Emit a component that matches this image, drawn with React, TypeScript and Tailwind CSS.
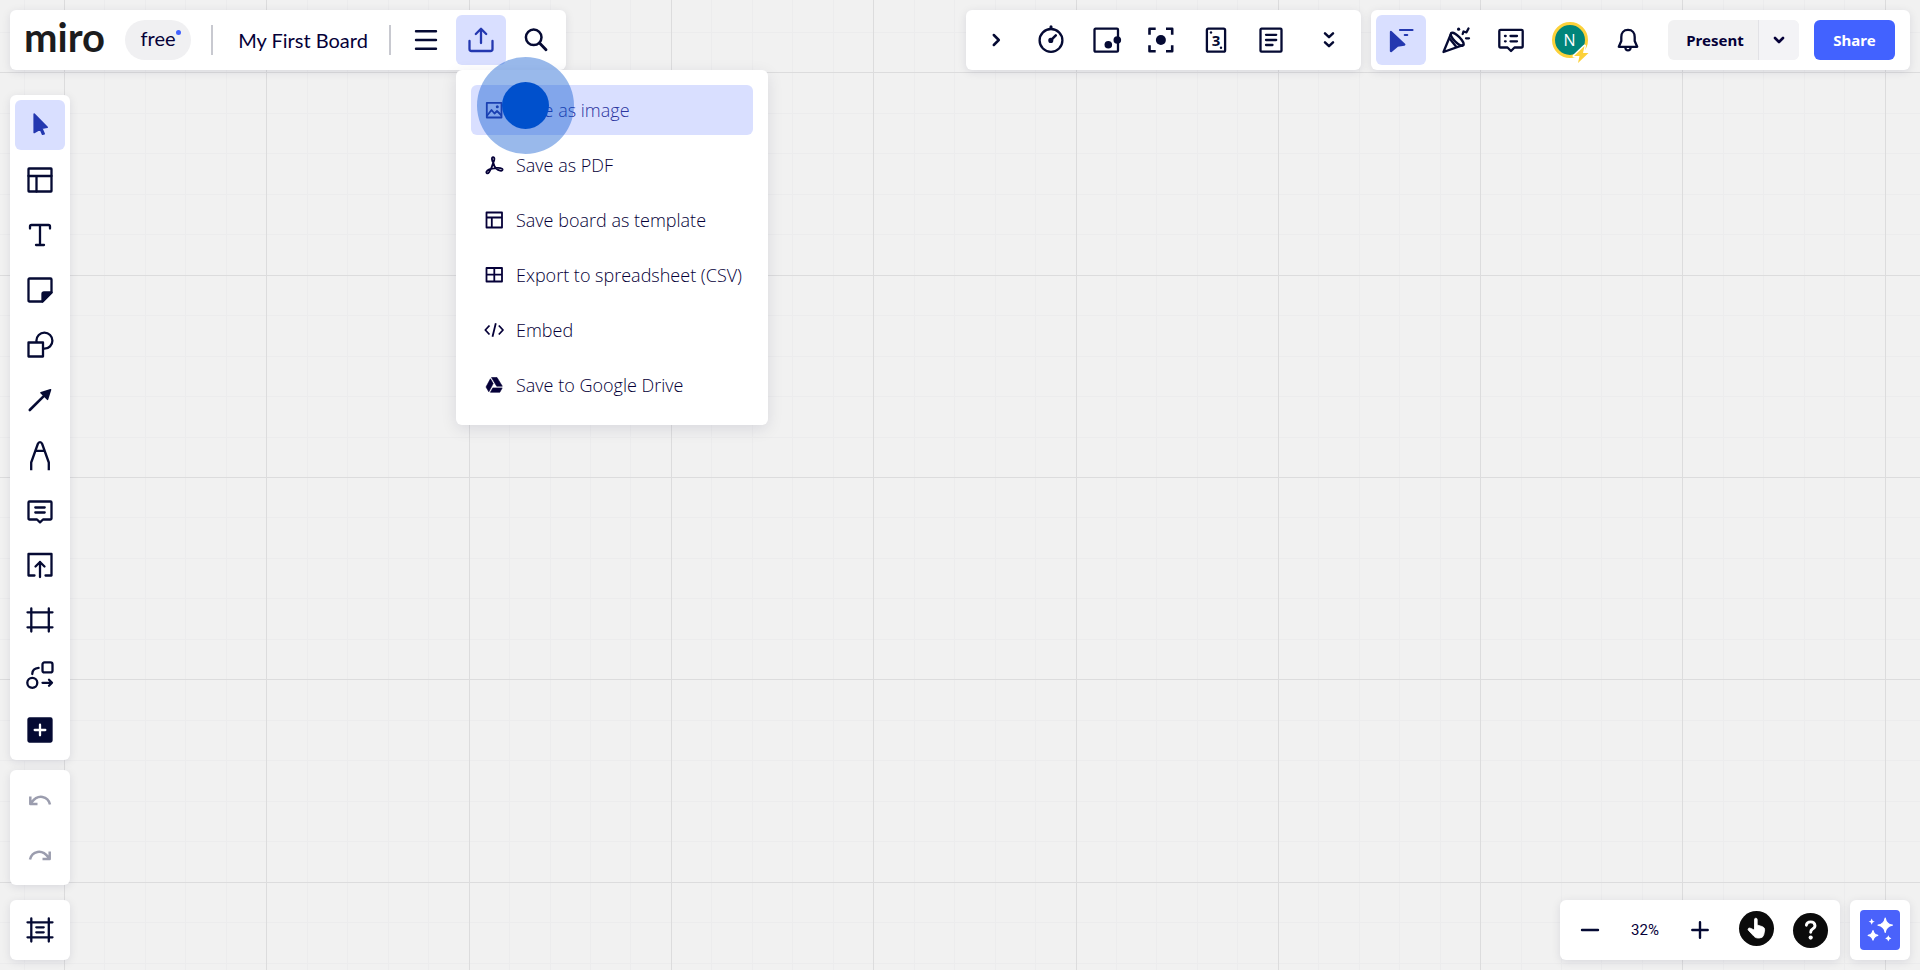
import type { ReactNode } from "react";

type IconProps = {
  children: ReactNode;
  className?: string;
};

type Tool = {
  label: string;
  icon: ReactNode;
};

const GRID_STEP = 40.46;
const GRID_X = 64 - GRID_STEP * 5;
const GRID_Y = 72.4 - GRID_STEP * 5;

// 28px drawing area used by every toolbar icon
function Icon({ children, className = "" }: IconProps) {
  return (
    <svg
      viewBox="0 0 28 28"
      className={`h-7 w-7 shrink-0 overflow-visible ${className}`}
      fill="none"
      stroke="currentColor"
      strokeWidth="2.3"
      strokeLinecap="round"
      strokeLinejoin="round"
      aria-hidden="true"
    >
      {children}
    </svg>
  );
}

function MenuIcon({ children }: IconProps) {
  return (
    <svg
      viewBox="0 0 24 24"
      className="h-6 w-6 shrink-0"
      fill="none"
      stroke="currentColor"
      strokeWidth="1.8"
      strokeLinejoin="round"
      aria-hidden="true"
    >
      {children}
    </svg>
  );
}

function IconButton({
  label,
  active = false,
  muted = false,
  children,
}: {
  label: string;
  active?: boolean;
  muted?: boolean;
  children: ReactNode;
}) {
  const color = active ? "bg-[#d9dfff] text-[#2438b0]" : muted ? "text-[#9b9dae]" : "text-[#050a33]";
  return (
    <button
      type="button"
      aria-label={label}
      className={`flex h-[50px] w-[50px] shrink-0 items-center justify-center rounded-md ${color}`}
    >
      {children}
    </button>
  );
}

function Panel({ children, className = "" }: IconProps) {
  return (
    <div className={`flex rounded-md bg-white shadow-[0_2px_10px_rgba(5,0,56,0.10)] ${className}`}>
      {children}
    </div>
  );
}

function BoardGrid() {
  const lines = Array.from({ length: 60 }, (_, i) => i);
  const ordered = [...lines.filter((i) => i % 5 !== 0), ...lines.filter((i) => i % 5 === 0)];
  return (
    <svg className="absolute inset-0 h-full w-full" aria-hidden="true">
      {ordered.map((i) => {
        const x = Math.round(GRID_X + i * GRID_STEP) + 0.5;
        const y = Math.round(GRID_Y + i * GRID_STEP) + 0.5;
        const color = i % 5 === 0 ? "#dcdcdd" : "#ececed";
        return (
          <g key={i} stroke={color}>
            <line x1={x} x2={x} y1="0" y2="100%" />
            <line x1="0" x2="100%" y1={y} y2={y} />
          </g>
        );
      })}
    </svg>
  );
}

const tools: Tool[] = [
  {
    label: "Templates",
    icon: (
      <Icon>
        <rect x="2.5" y="2.5" width="23" height="23" rx="0.5" />
        <path d="M2.5 10H25.5M10.5 10V25.5" />
      </Icon>
    ),
  },
  {
    label: "Text",
    icon: (
      <Icon>
        <path d="M4 7.5V5.5Q4 4 5.5 4H22.5Q24 4 24 5.5V7.5M14 4V24M10 24H18" />
      </Icon>
    ),
  },
  {
    label: "Sticky note",
    icon: (
      <Icon>
        <path d="M3.5 2.5H24.5Q25.5 2.5 25.5 3.5V16.5L16.5 25.5H3.5Q2.5 25.5 2.5 24.5V3.5Q2.5 2.5 3.5 2.5Z" />
        <path d="M25.5 16.5H18Q16.5 16.5 16.5 18V25.5Z" fill="currentColor" />
      </Icon>
    ),
  },
  {
    label: "Shapes",
    icon: (
      <Icon>
        <circle cx="18.4" cy="9.7" r="8" />
        <rect x="2.5" y="11.5" width="14.5" height="14" fill="white" />
      </Icon>
    ),
  },
  {
    label: "Connection line",
    icon: (
      <Icon>
        <path d="M3.8 24L18 9.8" strokeWidth="2.6" />
        <path d="M24.5 3.8L15 6.8L21.5 13.3Z" fill="currentColor" strokeWidth="1.6" />
      </Icon>
    ),
  },
  {
    label: "Pen",
    icon: (
      <Icon>
        <path d="M5.2 28V21.5L11.8 3Q12.5 1.2 14 1.2T16.2 3L22.8 21.5V28M9.5 9.8H18.5" strokeLinecap="square" />
      </Icon>
    ),
  },
  {
    label: "Comment",
    icon: (
      <Icon>
        <path d="M3.5 5.5H24.5Q25.5 5.5 25.5 6.5V22.5Q25.5 23.5 24.5 23.5H17L14 26.3L11 23.5H3.5Q2.5 23.5 2.5 22.5V6.5Q2.5 5.5 3.5 5.5Z" />
        <path d="M9.3 11.5H18.7M9.3 16.5H18.7" />
      </Icon>
    ),
  },
  {
    label: "Upload",
    icon: (
      <Icon>
        <path d="M8.5 24.5H2.5V3H25.5V24.5H19.5M14 26V11M9.5 15.5L14 11L18.5 15.5" />
      </Icon>
    ),
  },
  {
    label: "Frame",
    icon: (
      <Icon>
        <path d="M1.5 6.3H26.5M1.5 21.3H26.5M5.3 2.5V25.5M22.8 2.5V25.5" />
      </Icon>
    ),
  },
  {
    label: "Diagramming",
    icon: (
      <Icon>
        <rect x="16.5" y="1.4" width="10" height="10" rx="2" />
        <circle cx="6.3" cy="21.8" r="5" />
        <path d="M6.3 13V12.5Q6.6 7.3 12.6 6.8M16.5 21.8H26M23 18.8L26 21.8L23 24.8" />
      </Icon>
    ),
  },
  {
    label: "More apps",
    icon: (
      <Icon>
        <rect x="2.5" y="2.5" width="23" height="23" rx="1" fill="currentColor" />
        <path d="M14 8.7V19.3M8.7 14H19.3" stroke="white" />
      </Icon>
    ),
  },
];

const exportItems: Tool[] = [
  {
    label: "Save as image",
    icon: (
      <MenuIcon>
        <rect x="4.8" y="4.8" width="14.7" height="14.7" />
        <path d="M4.8 18L9.5 12L12.5 15.5L15 13L19.5 17.5" />
        <circle cx="15.3" cy="8.8" r="1.5" fill="currentColor" stroke="none" />
      </MenuIcon>
    ),
  },
  {
    label: "Save as PDF",
    icon: (
      <MenuIcon>
        <path d="M11.2 9.5C9.8 7.3 9.3 4.3 11.1 4.2C13 4.2 12.6 7.2 11.2 9.8C10.4 13 8.6 16.8 7.1 19.2C5.8 21.1 3.8 20.3 4.5 18.7C5.3 17.1 9.6 15.5 13.6 15C17 14.6 20.8 14.9 20.6 16.7C20.3 18.7 16.4 17.6 14.2 15.5C12.5 13.9 11.7 11.7 11.2 9.5Z" />
      </MenuIcon>
    ),
  },
  {
    label: "Save board as template",
    icon: (
      <MenuIcon>
        <rect x="4.5" y="4.5" width="15.5" height="15" />
        <path d="M4.5 9.5H20M9.8 9.5V19.5" />
      </MenuIcon>
    ),
  },
  {
    label: "Export to spreadsheet (CSV)",
    icon: (
      <MenuIcon>
        <rect x="4.5" y="5" width="15.5" height="13.5" />
        <path d="M4.5 11.7H20M12.3 5V18.5" />
      </MenuIcon>
    ),
  },
  {
    label: "Embed",
    icon: (
      <MenuIcon>
        <path d="M7.5 7.5L3.3 12L7.5 16.5M16.8 7.5L21 12L16.8 16.5M13.8 5.3L10.5 18.7" />
      </MenuIcon>
    ),
  },
  {
    label: "Save to Google Drive",
    icon: (
      <MenuIcon>
        <g fill="currentColor" stroke="currentColor" strokeWidth="0.6">
          <path d="M8.4 5.8L11.2 10.6L6.8 18.8L4 14Z" />
          <path d="M9.5 4.5H15L20.3 13.2H14.7Z" />
          <path d="M10.8 14.9H20.2L17.8 19.3H8.4Z" />
        </g>
      </MenuIcon>
    ),
  },
];

function ExportMenu() {
  return (
    <div
      role="menu"
      aria-label="Export"
      className="absolute left-0 top-[55px] z-20 flex w-[312px] flex-col gap-[5px] rounded-md bg-white p-[15px] shadow-[0_4px_16px_rgba(5,0,56,0.10)]"
    >
      {exportItems.map((item, i) => (
        <button
          key={item.label}
          type="button"
          role="menuitem"
          className={`flex h-[50px] items-center gap-[10px] whitespace-nowrap rounded-md pl-[11px] text-left font-['Open_Sans',sans-serif] text-lg font-light ${
            i === 0 ? "bg-[#d9dfff] text-[#2b35a0]" : "text-[#050038]"
          }`}
        >
          {item.icon}
          {item.label}
        </button>
      ))}
      {/* click marker */}
      <div className="pointer-events-none absolute left-[21px] top-[-13px] flex h-[97px] w-[97px] items-center justify-center rounded-full bg-[#0050cc]/40">
        <span className="h-[47px] w-[47px] rounded-full bg-[#0050cc]" />
      </div>
    </div>
  );
}

function BoardBar() {
  return (
    <Panel className="h-[60px] items-center pl-[14px] pr-[5px]">
      <a
        href="#"
        className="flex h-[60px] w-[86px] items-center pb-[6px] font-['Lato',sans-serif] text-[40px] font-bold leading-[60px] text-[#1c1c1e]"
      >
        miro
      </a>
      <button
        type="button"
        className="relative ml-[15px] h-10 w-[66px] rounded-full bg-[#f0f0f2] pb-1 font-['Lato',sans-serif] text-xl text-[#050038]"
      >
        free
        <span className="absolute right-[10px] top-[10px] h-[5px] w-[5px] rounded-full bg-[#4262ff]" />
      </button>
      <span className="ml-5 h-[30px] w-[2px] bg-[#c8c9d0]" />
      <button
        type="button"
        className="w-[176px] whitespace-nowrap pl-1 font-['Lato',sans-serif] text-xl text-[#050038]"
      >
        My First Board
      </button>
      <span className="h-[30px] w-[2px] bg-[#c8c9d0]" />
      <div className="ml-[10px] flex gap-[5px]">
        <IconButton label="Main menu">
          <Icon>
            <path d="M4 5.2H24M4 14H24M4 22.7H24" strokeWidth="2.4" />
          </Icon>
        </IconButton>
        <div className="relative">
          <IconButton label="Export this board" active>
            <Icon>
              <path d="M2.5 15V23Q2.5 25 4.5 25H23.5Q25.5 25 25.5 23V15M14 17V3M8.8 8L14 2.8L19.2 8" />
            </Icon>
          </IconButton>
          <ExportMenu />
        </div>
        <IconButton label="Search">
          <Icon>
            <circle cx="11.7" cy="11.3" r="7.8" strokeWidth="2.5" />
            <path d="M17.5 17L24 23.7" strokeWidth="2.9" />
          </Icon>
        </IconButton>
      </div>
    </Panel>
  );
}

function AppsBar() {
  return (
    <Panel className="h-[60px] items-center gap-[5px] p-[5px]">
      <IconButton label="Collapse">
        <Icon>
          <path d="M11.8 9L16.8 14L11.8 19" strokeWidth="2.5" />
        </Icon>
      </IconButton>
      <IconButton label="Timer">
        <Icon>
          <circle cx="14" cy="14.4" r="11.4" />
          <path d="M14 0.8V2.5" strokeWidth="3" />
          <path d="M14 14.2L18.8 9.4" strokeWidth="2.5" />
          <circle cx="13.8" cy="14.4" r="1.4" fill="currentColor" />
        </Icon>
      </IconButton>
      <IconButton label="Voting">
        <Icon>
          <rect x="2.5" y="2.7" width="23.5" height="23" rx="1" />
          <circle cx="16.3" cy="18.8" r="3.8" fill="currentColor" stroke="none" />
          <circle cx="25.3" cy="14" r="3.8" fill="currentColor" stroke="none" />
        </Icon>
      </IconButton>
      <IconButton label="Private mode">
        <Icon>
          <path
            d="M2.5 8.7V2.7H8.7M19 2.7H25.2V8.7M25.2 19.3V25.3H19M8.7 25.3H2.5V19.3"
            strokeLinecap="butt"
            strokeWidth="2.6"
          />
          <circle cx="13.9" cy="14" r="5" fill="currentColor" stroke="none" />
        </Icon>
      </IconButton>
      <IconButton label="Estimation">
        <Icon>
          <rect x="4.9" y="2.7" width="18.2" height="23" rx="1.5" />
          <circle cx="9" cy="6.5" r="1.2" fill="currentColor" stroke="none" />
          <circle cx="19" cy="21.7" r="1.2" fill="currentColor" stroke="none" />
          <text
            x="14"
            y="20"
            textAnchor="middle"
            fill="currentColor"
            stroke="none"
            className="font-['Open_Sans',sans-serif] text-[15px] font-bold"
          >
            3
          </text>
        </Icon>
      </IconButton>
      <IconButton label="Notes">
        <Icon>
          <rect x="3.5" y="2.7" width="21" height="23" rx="1" />
          <path d="M9 8.8H19.2M9 14H19.2M9 19H15.5" />
        </Icon>
      </IconButton>
      <button
        type="button"
        aria-label="More apps in toolbar"
        className="flex h-[50px] w-[55px] items-center justify-center text-[#050a33]"
      >
        <Icon>
          <path d="M10 7.3L14 11.1L18 7.3M10 16.3L14 20.1L18 16.3" strokeWidth="2.5" />
        </Icon>
      </button>
    </Panel>
  );
}

function CollaborationBar() {
  return (
    <Panel className="h-[60px] items-center pl-[5px] pr-[15px]">
      <div className="flex gap-[5px]">
        <IconButton label="Hide collaborators' cursors" active>
          <Icon>
            <path d="M4 6L17.3 18.5L10.5 19.5L4 25Z" fill="currentColor" />
            <path d="M13 4H25.5M17.8 9H20.2" strokeWidth="2.2" />
          </Icon>
        </IconButton>
        <IconButton label="Reactions">
          <Icon>
            <path d="M9.3 7L1.5 26L21.5 18.8" />
            <ellipse cx="15.2" cy="13.2" rx="3" ry="8.5" transform="rotate(-45 15.2 13.2)" />
            <path d="M8 13L14 20.5" />
            <circle cx="16.6" cy="3.2" r="1.6" fill="currentColor" stroke="none" />
            <path d="M20.7 8L21.5 5.5L24.5 6.3L26.5 2.5M24 12.3H27" />
          </Icon>
        </IconButton>
        <IconButton label="Comments">
          <Icon>
            <path d="M3.5 3.8H24.5Q25.7 3.8 25.7 5V20Q25.7 21.5 24.5 21.5H17.5L14 25L10.5 21.5H3.5Q2.3 21.5 2.3 20V5Q2.3 3.8 3.5 3.8Z" />
            <path d="M8 10H8.7M13.5 10H20M8 15.3H8.7M13.5 15.3H20" />
          </Icon>
        </IconButton>
        <button type="button" aria-label="Your profile" className="flex h-[50px] w-[57px] items-center justify-center">
          <span className="relative flex h-[36px] w-[36px] items-center justify-center rounded-full border-[3px] border-[#fcd13a] bg-[#00857a] font-['Open_Sans',sans-serif] text-base text-white">
            N
            <svg viewBox="0 0 18 20" className="absolute bottom-[-9px] right-[-5px] h-5 w-[18px] overflow-visible" aria-hidden="true">
              <path
                d="M12.5 2L2 12H7.5L6 19L16.5 9H11Z"
                fill="#fcd13a"
                stroke="white"
                strokeWidth="3"
                strokeLinejoin="round"
                paintOrder="stroke"
              />
            </svg>
          </span>
        </button>
        <IconButton label="Notifications">
          <Icon>
            <path d="M14 3.9C9.5 3.9 7.3 7 7.3 11V15L4.8 20.8H23.2L20.7 15V11C20.7 7 18.5 3.9 14 3.9Z" />
            <path d="M11.3 21.5Q11.6 24.4 14 24.4T16.7 21.5" />
          </Icon>
        </IconButton>
      </div>
      <div className="ml-[15px] flex h-10 overflow-hidden rounded-md bg-[#f1f1f2] text-[#050038]">
        <button
          type="button"
          className="w-[91px] border-r border-[#e2e2e6] pl-1 font-['Noto_Sans',sans-serif] text-[15px] font-bold"
        >
          Present
        </button>
        <button type="button" aria-label="Presentation options" className="flex w-10 items-center justify-center bg-[#f3f3f6]">
          <Icon>
            <path d="M10 12L14 16L18 12" strokeWidth="2.6" />
          </Icon>
        </button>
      </div>
      <button
        type="button"
        className="ml-[15px] h-10 w-[81px] rounded-md bg-[#4262ff] font-['Noto_Sans',sans-serif] text-[15px] font-bold text-white"
      >
        Share
      </button>
    </Panel>
  );
}

function ToolRail() {
  return (
    <aside className="flex w-[60px] flex-col">
      <Panel className="flex-col gap-[5px] p-[5px]">
        <IconButton label="Select" active>
          <Icon>
            <path d="M8.2 3L21.2 16.2L15.8 17.2L18.2 22.7L16.6 23.3L14.2 18L8.2 21.5Z" fill="currentColor" strokeWidth="1.6" />
          </Icon>
        </IconButton>
        {tools.map((tool) => (
          <IconButton key={tool.label} label={tool.label}>
            {tool.icon}
          </IconButton>
        ))}
      </Panel>
      <Panel className="mt-[10px] flex-col gap-[5px] p-[5px]">
        <IconButton label="Undo" muted>
          <Icon>
            <path d="M24 18.5C22 10 12 7.5 5.5 16.5M4.3 10.5V18H11.5" strokeLinecap="butt" strokeWidth="2.5" />
          </Icon>
        </IconButton>
        <IconButton label="Redo" muted>
          <Icon>
            <path d="M4 18.5C6 10 16 7.5 22.5 16.5M23.7 10.5V18H16.5" strokeLinecap="butt" strokeWidth="2.5" />
          </Icon>
        </IconButton>
      </Panel>
      <Panel className="mt-auto p-[5px]">
        <IconButton label="Frames">
          <Icon>
            <path d="M1.5 6.3H26.5M1.5 21.3H26.5M5.3 2.5V25.5M22.8 2.5V25.5M10.3 11.3H17.7M10.3 16.3H17.7" />
          </Icon>
        </IconButton>
      </Panel>
    </aside>
  );
}

function ZoomBar() {
  return (
    <div className="flex gap-[10px]">
      <Panel className="h-[60px] w-[280px] items-center pl-[5px]">
        <IconButton label="Zoom out">
          <Icon>
            <path d="M6 14H22" strokeWidth="2.4" />
          </Icon>
        </IconButton>
        <button type="button" className="w-[60px] font-['Roboto',sans-serif] text-[15px] text-[#050038]">
          32%
        </button>
        <IconButton label="Zoom in">
          <Icon>
            <path d="M6.3 14H21.7M14 6.3V21.7" strokeWidth="2.4" />
          </Icon>
        </IconButton>
        <button
          type="button"
          aria-label="Guided tour"
          className="mb-[3px] ml-[14px] flex h-[35px] w-[35px] items-center justify-center rounded-full bg-[#0b0b0b] text-white"
        >
          <Icon>
            <path
              d="M11.5 4.5Q11.5 3.2 12.8 3.2T14.2 4.5V10L19.5 11.7Q21.8 12.5 21.7 15L20.8 19.5Q20 23 16.5 23H14.5Q12.5 23 11 21.3L5.3 15.2Q4.5 14 5.7 13.2Q6.7 12.8 8 13.5L11.2 15Z"
              fill="currentColor"
              strokeWidth="0.8"
            />
          </Icon>
        </button>
        <button
          type="button"
          aria-label="Help"
          className="ml-[19px] flex h-[35px] w-[35px] items-center justify-center rounded-full bg-[#0b0b0b] text-white"
        >
          <Icon>
            <path d="M9.4 9.2Q9.8 5.9 13.7 5.9T18 9.6Q18 11.7 15.5 13.1Q13.7 14 13.7 16.3" strokeWidth="2.9" />
            <circle cx="13.7" cy="21.6" r="2.1" fill="currentColor" stroke="none" />
          </Icon>
        </button>
      </Panel>
      <Panel className="h-[60px] w-[60px] items-center justify-center">
        <button
          type="button"
          aria-label="AI assistant"
          className="flex h-10 w-10 items-center justify-center rounded bg-[#4a62fb] text-white"
        >
          <Icon>
            <g fill="currentColor" stroke="none">
              <path d="M19.2 2Q20.2 8.2 26.4 9.2Q20.2 10.2 19.2 16.4Q18.2 10.2 12 9.2Q18.2 8.2 19.2 2Z" strokeWidth="1.2" stroke="currentColor" />
              <path d="M7 14.5Q7.8 18.5 11.8 19.3Q7.8 20.1 7 24.1Q6.2 20.1 2.2 19.3Q6.2 18.5 7 14.5Z" strokeWidth="1.2" stroke="currentColor" />
              <path d="M5.7 2.5Q6.1 5.2 8.8 5.6Q6.1 6 5.7 8.7Q5.3 6 2.6 5.6Q5.3 5.2 5.7 2.5Z" />
              <path d="M22.3 19.3Q22.7 22 25.4 22.4Q22.7 22.8 22.3 25.5Q21.9 22.8 19.2 22.4Q21.9 22 22.3 19.3Z" />
            </g>
          </Icon>
        </button>
      </Panel>
    </div>
  );
}

export default function App() {
  return (
    <div className="relative flex min-h-screen overflow-hidden bg-[#f1f1f1]">
      <BoardGrid />
      <div className="relative flex flex-1 flex-col p-[10px]">
        <header className="relative z-10 flex justify-between">
          <BoardBar />
          <div className="flex gap-[10px]">
            <AppsBar />
            <CollaborationBar />
          </div>
        </header>
        <main className="mt-[25px] flex flex-1 items-stretch justify-between">
          <ToolRail />
          <div className="flex items-end">
            <ZoomBar />
          </div>
        </main>
      </div>
    </div>
  );
}
